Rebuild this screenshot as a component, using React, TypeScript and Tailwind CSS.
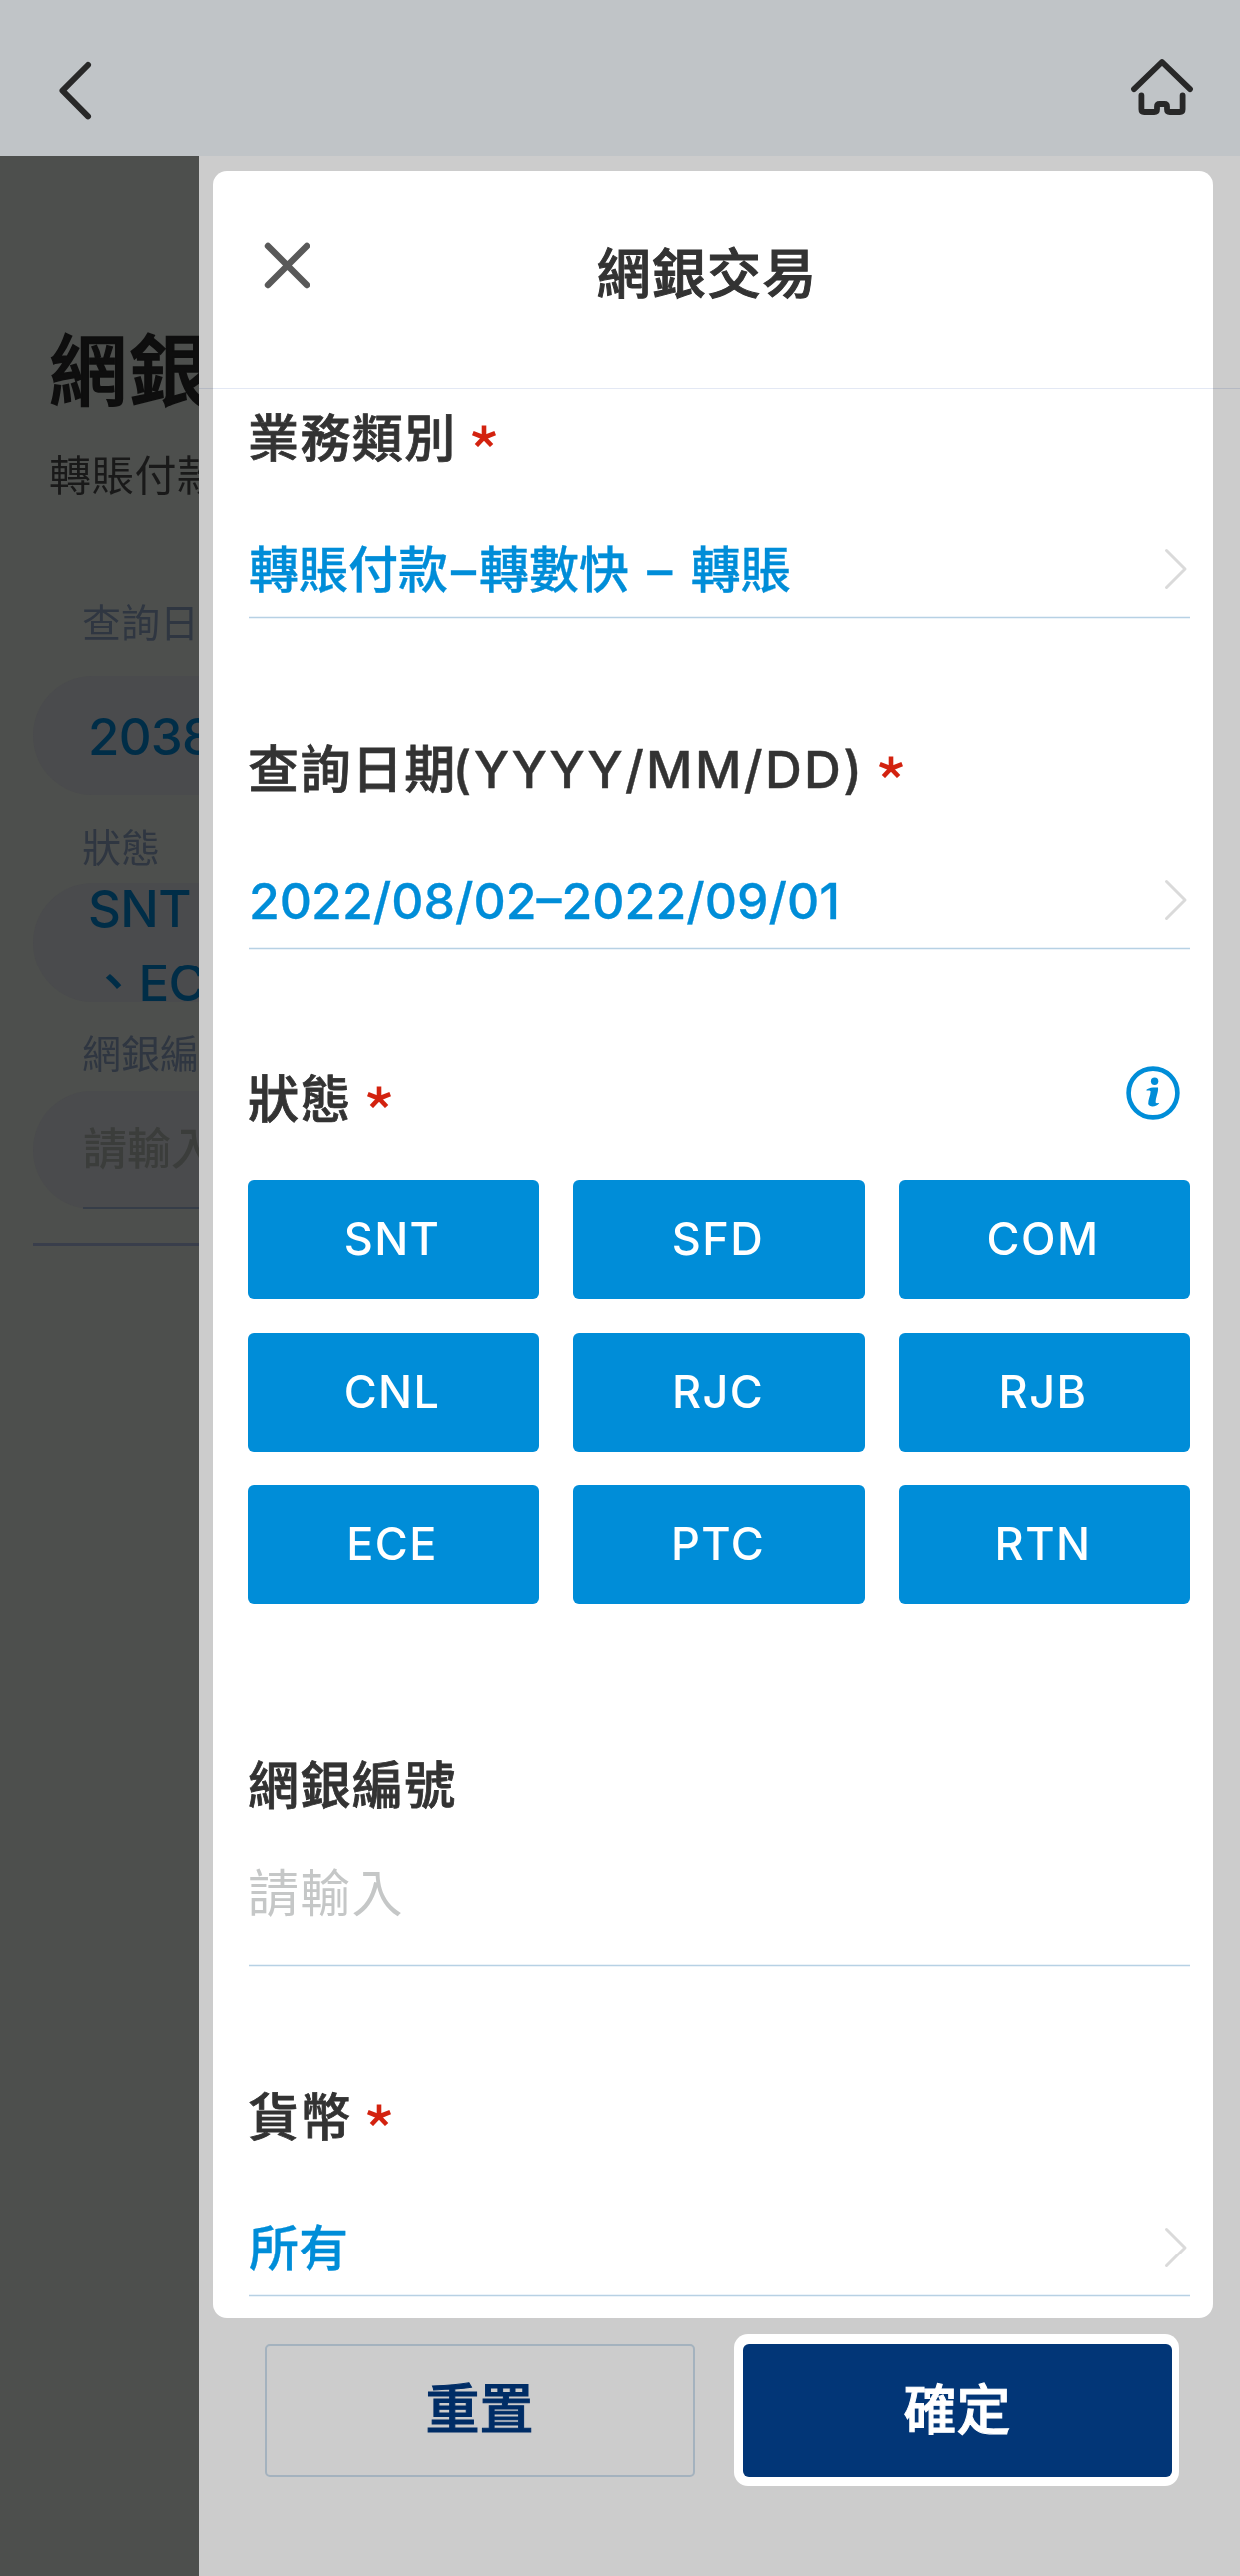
import { useState, type ReactNode } from "react";

const STATUS_CODES = ["SNT", "SFD", "COM", "CNL", "RJC", "RJB", "ECE", "PTC", "RTN"];

function RequiredMark() {
  return (
    <svg width="24" height="22" viewBox="0 0 24 22" className="ml-[15px] -mt-[7px]">
      <g stroke="#d3220f" strokeWidth="4.6">
        <path d="M12 12.5V0.5" />
        <path d="M12 12.5L0.8 8.2" />
        <path d="M12 12.5L23.2 8.2" />
        <path d="M12 12.5L4.4 20.5" />
        <path d="M12 12.5L19.6 20.5" />
      </g>
    </svg>
  );
}

function ChevronIcon() {
  return (
    <svg width="24" height="42" viewBox="0 0 24 42" fill="none" className="mr-[2px] -mt-[3px]">
      <path
        d="M2.5 2.5L21 21L2.5 39.5"
        stroke="#dadada"
        strokeWidth="3"
        strokeLinecap="round"
        strokeLinejoin="round"
      />
    </svg>
  );
}

function InfoIcon() {
  return (
    <svg width="54" height="54" viewBox="0 0 54 54" fill="none">
      <circle cx="27" cy="27" r="24.4" stroke="#008dd8" strokeWidth="4.6" />
      <circle cx="28.6" cy="15.3" r="3.7" fill="#008dd8" />
      <path
        d="M20.6 23.4C24.5 21.4 28 21.4 32 21.6C32.6 26 29.8 31 29.6 36.4C30.4 37.6 31.4 37 33.2 37C31.4 40.6 23.6 42 22.2 38C22 33.6 24.6 29.4 24.6 25.2C23.6 24.4 22.2 24.6 20.6 24.8Z"
        fill="#008dd8"
      />
    </svg>
  );
}

function Label({ children, required }: { children: ReactNode; required?: boolean }) {
  return (
    <div className="-ml-px flex h-[60px] items-center">
      <span className="text-[51px] leading-[60px] font-medium tracking-[1.4px] whitespace-nowrap text-[#333333] [-webkit-text-stroke:0.8px_#333333]">
        {children}
      </span>
      {required && <RequiredMark />}
    </div>
  );
}

function Underline() {
  return <div className="h-[3px] border-y border-[#ecf3f9] bg-[#b7d1e4]" />;
}

interface ISelectField {
  label: ReactNode;
  children: ReactNode;
}

function SelectField({ label, children }: ISelectField) {
  return (
    <div>
      <Label required>{label}</Label>
      <div className="mt-[71px] mb-4 flex h-[60px] items-center justify-between text-[50px] leading-[60px] font-medium whitespace-nowrap text-[#008dd8] [-webkit-text-stroke:0.3px_#008dd8]">
        {children}
        <ChevronIcon />
      </div>
      <Underline />
    </div>
  );
}

function TopBar() {
  return (
    <header className="flex h-[156px] shrink-0 items-start justify-between bg-[#c0c4c7] pl-[56px] pr-[44px] pt-[56px]">
      <svg width="40" height="68" viewBox="0 0 40 68" fill="none">
        <path
          d="M32 9L6.5 34.6L32 60.3"
          stroke="#282828"
          strokeWidth="6"
          strokeLinecap="round"
          strokeLinejoin="round"
        />
      </svg>
      <svg width="68" height="64" viewBox="0 0 68 64" fill="none">
        <g stroke="#282828" strokeWidth="5.8" strokeLinecap="round" strokeLinejoin="round">
          <path d="M6 33.2L34 6L62 33.2" />
          <path d="M13.4 39.5V53.2Q13.4 56 16.2 56H26.2Q29 56 29 53.2V50.6Q29 48 31.6 48H36.4Q39 48 39 50.6V53.2Q39 56 41.8 56H51.8Q54.6 56 54.6 53.2V39.5" />
        </g>
      </svg>
    </header>
  );
}

function DimmedPage() {
  return (
    <aside className="w-[199px] shrink-0 overflow-hidden whitespace-nowrap bg-[#4d4f4d]">
      <h1 className="mt-[167px] ml-[49px] text-[78px] leading-[100px] font-medium tracking-[2px] text-[#0e0e0e] [-webkit-text-stroke:1.6px_#0e0e0e]">
        網銀交易
      </h1>
      <p className="mt-[24px] ml-[49px] text-[42px] leading-[60px] tracking-[0.7px] text-[#191919]">轉賬付款</p>
      <div className="mt-[92px] ml-[82px] text-[39px] leading-[50px] text-[#2f3641]">查詢日期</div>
      <div className="mt-[28px] ml-[33px] flex h-[119px] w-[600px] items-center rounded-full bg-[#4a4b4d] pt-[3px] pl-[55px] text-[51px] font-medium tracking-[-0.8px] text-[#002d47]">
        2038/08/02
      </div>
      <div className="mt-[28px] ml-[82px] text-[39px] leading-[50px] text-[#2f3641]">狀態</div>
      <div className="mt-[10px] ml-[33px] flex h-[120px] w-[600px] flex-col rounded-full bg-[#4a4b4d] pl-[55px] text-[51px] leading-[75px] font-medium tracking-[-0.6px] text-[#002d47]">
        <div className="-mt-[12px]">SNT</div>
        <div>、EC</div>
      </div>
      <div className="mt-[27px] ml-[82px] text-[39px] leading-[50px] text-[#2f3641]">網銀編號</div>
      <div className="mt-[12px] ml-[33px] h-[118px] w-[600px] rounded-full bg-[#4a4b4d] pl-[50px]">
        <div className="h-[118px] border-b-2 border-[#363d48] text-[44px] leading-[116px] font-medium text-[#3b3d3b]">
          請輸入
        </div>
      </div>
      <div className="mt-[34px] ml-[33px] h-[3px] bg-[#393e4b]" />
    </aside>
  );
}

function App() {
  const [selected, setSelected] = useState<string[]>(STATUS_CODES);

  const toggleStatus = (code: string) => {
    setSelected((prev) => (prev.includes(code) ? prev.filter((c) => c !== code) : [...prev, code]));
  };

  return (
    <div className="flex h-[2580px] w-[1242px] flex-col overflow-hidden bg-[#cccccc] font-['Inter','Noto_Sans_CJK_TC',sans-serif]">
      <TopBar />
      <div className="flex flex-1">
        <DimmedPage />
        <div className="flex-1 pt-[15px]">
          <section className="ml-[14px] mr-[27px] h-[2151px] rounded-[14px] bg-white">
            <div className="relative flex h-[218px] items-center justify-center">
              <button className="absolute top-[70px] left-[50px]">
                <svg width="49" height="49" viewBox="0 0 49 49" fill="none">
                  <path
                    d="M5 5L44 44M44 5L5 44"
                    stroke="#595959"
                    strokeWidth="6.4"
                    strokeLinecap="round"
                  />
                </svg>
              </button>
              <h2 className="mt-[-10px] ml-[-12px] text-[54px] leading-[70px] font-medium tracking-[1.2px] text-[#333333] [-webkit-text-stroke:1px_#333333]">
                網銀交易
              </h2>
            </div>
            <div className="-mr-[27px] -ml-[14px] h-px bg-[#e3e8f4] mix-blend-multiply" />

            <div className="pt-5 pr-[23px] pl-9">
              <SelectField label="業務類別">
                <span>
                  轉賬付款<span className="px-[3px]">–</span>轉數快<span className="px-[5px]"> – </span>轉賬
                </span>
              </SelectField>

              <div className="mt-[121px]">
                <SelectField
                  label={
                    <>
                      查詢日期
                      <span className="-ml-[4px] tracking-[2.3px] [-webkit-text-stroke:0.4px_#333333]">
                        (YYYY/MM/DD)
                      </span>
                    </>
                  }
                >
                  <span>2022/08/02–2022/09/01</span>
                </SelectField>
              </div>

              <div className="mt-[121px] flex items-start justify-between">
                <Label required>狀態</Label>
                <button className="-mt-[4px] mr-[10px]">
                  <InfoIcon />
                </button>
              </div>
              <div className="mt-[50px] -ml-px grid grid-cols-3 gap-x-[34px] gap-y-[33.5px]">
                {STATUS_CODES.map((code) => (
                  <button
                    key={code}
                    onClick={() => toggleStatus(code)}
                    className={
                      selected.includes(code)
                        ? "h-[119px] rounded-md bg-[#008dd8] pr-[2px] pb-px text-[45px] font-medium tracking-[1.4px] text-white"
                        : "h-[119px] rounded-md bg-gray-100 pr-[2px] pb-px text-[45px] font-medium tracking-[1.4px] text-[#333333]"
                    }
                  >
                    {code}
                  </button>
                ))}
              </div>

              <div className="mt-[153px]">
                <Label>網銀編號</Label>
                <input
                  placeholder="請輸入"
                  className="mt-12 mb-10 -ml-px block h-[60px] w-full text-[51px] leading-[60px] tracking-[1.2px] outline-none placeholder:text-[#c5c7c7]"
                />
                <Underline />
              </div>

              <div className="mt-[121px]">
                <SelectField label="貨幣">
                  <span>所有</span>
                </SelectField>
              </div>
            </div>
          </section>

          <div className="mt-4 flex items-center pl-[66px]">
            <button className="h-[133px] w-[431px] rounded-[5px] border-2 border-[#a4b2be] pb-px text-[54px] font-medium text-[#002d66] [-webkit-text-stroke:1px_#002d66]">
              重置
            </button>
            <div className="ml-[39px] rounded-[14px] bg-white pt-[10px] pr-[7px] pb-[9px] pl-[9px]">
              <button className="block h-[133px] w-[430px] rounded-md bg-[#023677] pr-px pb-px text-[54px] font-medium text-white [-webkit-text-stroke:1px_#ffffff]">
                確定
              </button>
            </div>
          </div>
        </div>
      </div>
    </div>
  );
}

export default App;
